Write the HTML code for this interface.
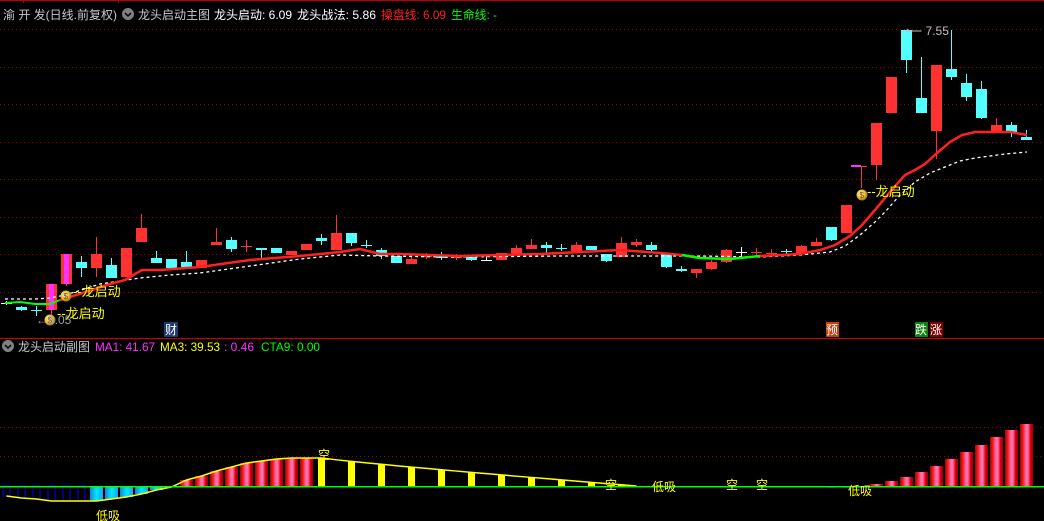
<!DOCTYPE html>
<html><head><meta charset="utf-8"><style>
html,body{margin:0;padding:0;background:#000;width:1044px;height:521px;overflow:hidden}
svg{display:block}
text{font-family:"Liberation Sans","Noto Sans CJK SC",sans-serif}
</style></head><body>
<svg id="s" width="1044" height="521" xmlns="http://www.w3.org/2000/svg" shape-rendering="crispEdges">
<defs>
<linearGradient id="rg" x1="0" x2="1" y1="0" y2="0">
<stop offset="0" stop-color="#a00000"/><stop offset="0.25" stop-color="#ff2020"/><stop offset="0.45" stop-color="#ff70b0"/><stop offset="0.6" stop-color="#ff70b0"/><stop offset="0.8" stop-color="#e00010"/><stop offset="1" stop-color="#900000"/>
</linearGradient>
<linearGradient id="cg" x1="0" x2="1" y1="0" y2="0">
<stop offset="0" stop-color="#1a7fe0"/><stop offset="0.5" stop-color="#00e8ff"/><stop offset="1" stop-color="#20a0f0"/>
</linearGradient>
<radialGradient id="bag" cx="0.4" cy="0.4" r="0.6"><stop offset="0" stop-color="#fff8c0"/><stop offset="0.6" stop-color="#e8c040"/><stop offset="1" stop-color="#a07010"/></radialGradient>
</defs>
<g id="g"></g>
</svg>
<script>
var g=document.getElementById('g'),h='';
function L(x1,y1,x2,y2,c,w,d){h+='<line x1="'+x1+'" y1="'+y1+'" x2="'+x2+'" y2="'+y2+'" stroke="'+c+'" stroke-width="'+(w||1)+'"'+(d?' stroke-dasharray="'+d+'"':'')+'/>';}
function R(x,y,w,hh,c,st){h+='<rect x="'+x+'" y="'+y+'" width="'+w+'" height="'+hh+'" fill="'+c+'"'+(st?' stroke="'+st+'"':'')+'/>';}
function T(x,y,t,c,s,tl){h+='<text x="'+x+'" y="'+y+'" fill="'+c+'" font-size="'+(s||12)+'" '+(tl?'textLength="'+tl+'" lengthAdjust="spacingAndGlyphs"':'')+'>'+t+'</text>';}
function P(pts,c,w,d){h+='<polyline fill="none" points="'+pts+'" stroke="'+c+'" stroke-width="'+w+'"'+(d?' stroke-dasharray="'+d+'"':'')+' shape-rendering="auto"/>';}
L(0,0.5,1044,0.5,'#c00000');L(23.5,0,23.5,3,'#c00000');L(118.5,0,118.5,3,'#c00000');
[29,67,104,142,179,217,254,292].forEach(function(y){L(0,y+.5,1044,y+.5,'#a00000',1,'1 3');});
L(0,338.5,1044,338.5,'#d00000');
[427,456].forEach(function(y){L(0,y+.5,1044,y+.5,'#a00000',1,'1 3');});
var C=[[0,'w',303,303,301,305],[1,'c',307,310,306,311],[2,'c',310,310,306,316],[3,'m',284,310,284,320],[4,'m',254,284,254,286],
[5,'c',262,268,256,277],[6,'r',254,268,237,277],[7,'c',265,278,258,278],[8,'r',248,277,248,277],[9,'r',228,242,214,242],
[10,'c',258,263,251,263],[11,'c',259,268,259,268],[12,'c',262,268,251,268],[13,'r',260,268,260,268],[14,'r',242,245,228,245],
[15,'c',240,249,237,252],[16,'r',246,246,240,252],[17,'c',248,250,248,258],[18,'c',248,253,248,253],[19,'r',251,255,251,255],
[20,'r',244,250,244,250],[21,'c',238,241,234,245],[22,'r',233,250,215,250],[23,'c',233,243,233,246],[24,'c',245,245,240,248],
[25,'c',250,256,248,259],[26,'c',256,263,256,263],[27,'r',259,264,257,264],[28,'r',256,256,253,259],[29,'c',255,258,252,260],
[30,'r',257,257,254,260],[31,'c',257,260,255,261],[32,'w',260,260,256,261],[33,'r',253,260,253,260],[34,'r',248,255,245,255],
[35,'r',245,249,239,249],[36,'c',245,248,242,254],[37,'c',248,248,244,251],[38,'r',245,251,242,251],[39,'c',246,250,246,250],
[40,'c',254,261,254,262],[41,'r',243,257,237,257],[42,'r',242,245,239,247],[43,'c',245,250,242,253],[44,'c',254,267,254,268],
[45,'c',269,271,266,272],[46,'r',269,273,269,278],[47,'r',262,269,260,270],[48,'r',250,262,249,263],[49,'w',252,252,247,256],
[50,'r',252,252,248,256],[51,'r',253,253,249,256],[52,'c',251,251,249,254],[53,'r',246,253,245,253],[54,'r',242,246,238,246],
[55,'c',227,240,227,241],[56,'r',205,233,205,233],[57,'r',166,166,166,188],[58,'r',123,165,123,180],[59,'r',77,113,77,113],
[60,'c',30,60,30,73],[61,'c',98,113,57,113],[62,'r',65,131,65,159],[63,'c',69,77,30,80],[64,'c',83,97,74,101],
[65,'c',89,118,81,119],[66,'r',125,131,118,131],[67,'c',125,132,122,137],[68,'c',137,140,130,140]];
var col={r:'#ff3232',c:'#54ffff',m:'#ff32ff',w:'#ffffff'};
C.forEach(function(k){var cx=6.5+15*k[0],c=col[k[1]];
 if(k[1]=='m'){L(cx,k[4],cx,k[5],'#ff3232');R(cx-5.5,k[2],11,k[3]-k[2],'#ff3232');R(cx-2.5,k[2],5,k[3]-k[2],'#ff32ff');return;}
 L(cx,k[4],cx,k[5],c);
 if(k[3]-k[2]<1){L(cx-5.5,k[2]+.5,cx+5.5,k[2]+.5,c);}else R(cx-5.5,k[2],11,k[3]-k[2],c);
});
R(851,165,10,2,'#ff32ff');
P('5,299 20,299 35,299 50,298 60,296 75,292 100,284 120,281 140,278 170,275 200,273 250,266 300,259 340,255 380,256 450,257 560,256 700,256 760,257 800,255 830,252 845,246 860,235 875,222 885,212 900,195 915,182 930,173 945,167 960,161 975,158 990,156 1005,154 1027,152','#ffffff',1.3,'3 3');
P('5,303 20,302 35,304 50,304 60,300','#00ff00',2);
P('60,300 73,296 110,284 125,280 135,274 142,270 160,270 200,267 250,260 300,256 340,252 360,249 380,254 400,254 460,256 500,255 540,254 580,252 620,250 660,253 682,255','#ff2020',2.5);
P('682,255 700,258 730,259 760,256','#00ff00',2.5);
P('760,256 800,254 820,250 835,245 850,236 862,225 875,210 890,192 905,175 915,170 925,164 937,153 950,142 962,135 975,132 990,132 1010,132 1027,135','#ff2020',2.5);
T(3,19,'渝 开 发(日线.前复权)','#c8c8c8',12,114);
h+='<circle cx="128" cy="14" r="6" fill="#808080"/><path d="M125 13l3 3 3-3" stroke="#000" stroke-width="1.5" fill="none" shape-rendering="auto"/>';
T(138,19,'龙头启动主图','#c8c8c8',12,72);
T(214,19,'龙头启动: 6.09','#ffffff',12,78);
T(297,19,'龙头战法: 5.86','#ffffff',12,79);
T(381,19,'操盘线: 6.09','#ff2020',12,65);
T(451,19,'生命线: -','#00ff00',12,46);
function bag(x,y){h+='<circle cx="'+x+'" cy="'+y+'" r="5.5" fill="url(#bag)" shape-rendering="auto"/><text x="'+(x-2.5)+'" y="'+(y+3)+'" fill="#804000" font-size="8">$</text>';}
bag(50,320);bag(66,296);bag(862,195);
T(57,318,'--龙启动','#ffff00',13);T(73,296,'--龙启动','#ffff00',13);T(867,196,'--龙启动','#ffff00',13);
T(36,324,'←6.05','#a0a0a0',12);T(905,35,'⟵ 7.55','#c0c0c0',12);
R(164,322,14,15,'#1c3c70');T(165,334,'财','#ffffff',12);
R(826,322,13,15,'#c04010');T(826,334,'预','#ffffff',12);
R(915,322,13,15,'#108010');T(915,334,'跌','#ffffff',12);
R(930,322,13,15,'#800000');T(930,334,'涨','#ffffff',12);
h+='<circle cx="8" cy="346" r="6" fill="#808080"/><path d="M5 345l3 3 3-3" stroke="#000" stroke-width="1.5" fill="none" shape-rendering="auto"/>';
T(18,351,'龙头启动副图','#c8c8c8',12,72);
T(95,351,'MA1: 41.67','#ff32ff',12,60);T(160,351,'MA3: 39.53','#ffff00',12,60);T(224,351,': 0.46','#ff32ff',12,30);T(261,351,'CTA9: 0.00','#00ff00',12,59);
var Z=486,yl=[];
var blue=[496,498,499,501,501,501];
blue.forEach(function(v,i){var cx=6.5+15*i;h+='<rect x="'+(cx-3.5)+'" y="'+Z+'" width="7" height="'+(v-Z)+'" fill="none" stroke="#0000ff"/>';yl.push([cx,v]);});
[501,499,497,494,490].forEach(function(v,j){var i=6+j,cx=6.5+15*i;R(cx-6.5,Z,13,v-Z,'url(#cg)');yl.push([cx,v]);});
yl.push([171.5,487]);
[480,476,471,467,463,461,459,458,458].forEach(function(v,j){var i=12+j,cx=6.5+15*i;R(cx-6.5,v,13,Z-v,'url(#rg)');yl.push([cx,v]);});
for(var i=21;i<=42;i++){var v=458+(486-458)*Math.pow((i-21)/21,0.9),cx=6.5+15*i;if(i%2==1)R(cx-3.5,v,7,Z-v,'#ffff00');yl.push([cx,v]);}
var pts=yl.map(function(p){return p[0]+','+p[1];}).join(' ');
P(pts,'#ffff00',1.5);
[55,56,57].forEach(function(a){R(6.5+15*a-3.5,Z,7,2,'#0000ff');});
[484,481,477,472,466,459,452,445,437,430,424].forEach(function(v,j){var i=58+j,cx=6.5+15*i;R(cx-6.5,v,13,Z-v,'url(#rg)');});
L(0,486.5,1044,486.5,'#00ff00',1.5);
T(318,459,'空','#ffff00',12);T(96,520,'低吸','#ffff00',12);T(605,489,'空','#ffff00',12);T(652,491,'低吸','#ffff00',12);
T(726,489,'空','#ffff00',12);T(756,489,'空','#ffff00',12);T(848,495,'低吸','#ffff00',12);
g.innerHTML=h;
</script>
</body></html>
